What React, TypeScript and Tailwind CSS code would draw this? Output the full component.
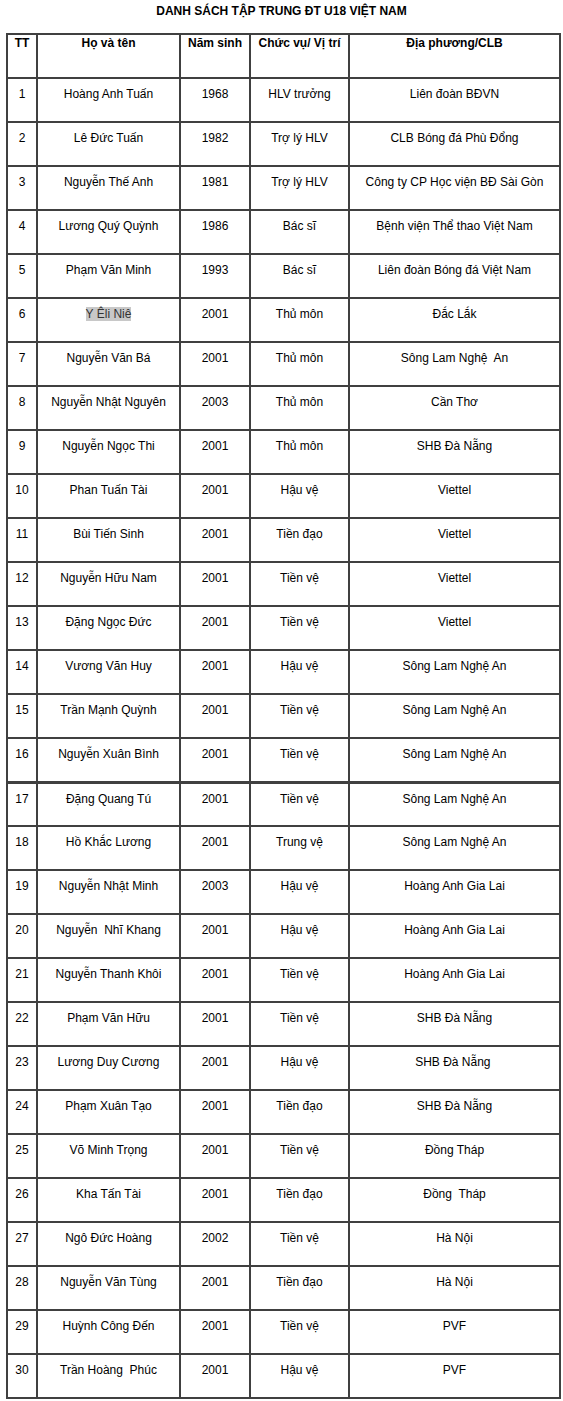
import React from "react";

type Row = [string, string, string, string, string];

const rows: Row[] = [
  ["1", "Hoàng Anh Tuấn", "1968", "HLV trưởng", "Liên đoàn BĐVN"],
  ["2", "Lê Đức Tuấn", "1982", "Trợ lý HLV", "CLB Bóng đá Phù Đổng"],
  ["3", "Nguyễn Thế Anh", "1981", "Trợ lý HLV", "Công ty CP Học viện BĐ Sài Gòn"],
  ["4", "Lương Quý Quỳnh", "1986", "Bác sĩ", "Bệnh viện Thể thao Việt Nam"],
  ["5", "Phạm Văn Minh", "1993", "Bác sĩ", "Liên đoàn Bóng đá Việt Nam"],
  ["6", "Y Êli Niê", "2001", "Thủ môn", "Đắc Lắk"],
  ["7", "Nguyễn Văn Bá", "2001", "Thủ môn", "Sông Lam Nghệ  An"],
  ["8", "Nguyễn Nhật Nguyên", "2003", "Thủ môn", "Cần Thơ"],
  ["9", "Nguyễn Ngọc Thi", "2001", "Thủ môn", "SHB Đà Nẵng"],
  ["10", "Phan Tuấn Tài", "2001", "Hậu vệ", "Viettel"],
  ["11", "Bùi Tiến Sinh", "2001", "Tiền đạo", "Viettel"],
  ["12", "Nguyễn Hữu Nam", "2001", "Tiền vệ", "Viettel"],
  ["13", "Đặng Ngọc Đức", "2001", "Tiền vệ", "Viettel"],
  ["14", "Vương Văn Huy", "2001", "Hậu vệ", "Sông Lam Nghệ An"],
  ["15", "Trần Mạnh Quỳnh", "2001", "Tiền vệ", "Sông Lam Nghệ An"],
  ["16", "Nguyễn Xuân Bình", "2001", "Tiền vệ", "Sông Lam Nghệ An"],
  ["17", "Đặng Quang Tú", "2001", "Tiền vệ", "Sông Lam Nghệ An"],
  ["18", "Hồ Khắc Lương", "2001", "Trung vệ", "Sông Lam Nghệ An"],
  ["19", "Nguyễn Nhật Minh", "2003", "Hậu vệ", "Hoàng Anh Gia Lai"],
  ["20", "Nguyễn  Nhĩ Khang", "2001", "Hậu vệ", "Hoàng Anh Gia Lai"],
  ["21", "Nguyễn Thanh Khôi", "2001", "Tiền vệ", "Hoàng Anh Gia Lai"],
  ["22", "Phạm Văn Hữu", "2001", "Tiền vệ", "SHB Đà Nẵng"],
  ["23", "Lương Duy Cương", "2001", "Hậu vệ", "SHB Đà Nẵng\u00a0"],
  ["24", "Phạm Xuân Tạo", "2001", "Tiền đạo", "SHB Đà Nẵng"],
  ["25", "Võ Minh Trọng", "2001", "Tiền vệ", "Đồng Tháp"],
  ["26", "Kha Tấn Tài", "2001", "Tiền đạo", "Đồng  Tháp"],
  ["27", "Ngô Đức Hoàng", "2002", "Tiền vệ", "Hà Nội"],
  ["28", "Nguyễn Văn Tùng", "2001", "Tiền đạo", "Hà Nội"],
  ["29", "Huỳnh Công Đến", "2001", "Tiền vệ", "PVF"],
  ["30", "Trần Hoàng  Phúc", "2001", "Hậu vệ", "PVF"],
];

const headers = ["TT", "Họ và tên", "Năm sinh", "Chức vụ/ Vị trí", "Địa phương/CLB"];

export default function App() {
  return (
    <div className="w-[563px] bg-white pb-[2px] font-['Liberation_Sans',Arial,sans-serif] text-[12px] text-black">
      <h1 className="h-[33px] pt-[4px] text-center text-[12px] leading-[14px] font-bold">
        DANH SÁCH TẬP TRUNG ĐT U18 VIỆT NAM
      </h1>
      <table className="ml-[6px] w-[553px] table-fixed border-collapse border-2 border-[#404040]">
        <colgroup>
          <col className="w-[30px]" />
          <col className="w-[143px]" />
          <col className="w-[70px]" />
          <col className="w-[99px]" />
          <col className="w-[211px]" />
        </colgroup>
        <thead>
          <tr className="h-[44px]">
            {headers.map((h) => (
              <th
                key={h}
                className="border-2 border-[#404040] px-1 pt-[1px] align-top text-center text-[12px] leading-[14px] font-bold"
              >
                {h}
              </th>
            ))}
          </tr>
        </thead>
        <tbody>
          {rows.map((r) => {
            const sep = r[0] === "16";
            return (
              <tr key={r[0]} className="h-[44px]">
                {r.map((c, i) => (
                  <td
                    key={i}
                    className={
                      sep
                        ? "border-2 border-b-[3px] border-[#404040] px-1 pt-[8px] align-top text-center leading-[14px] whitespace-pre"
                        : "border-2 border-[#404040] px-1 pt-[8px] align-top text-center leading-[14px] whitespace-pre"
                    }
                  >
                    {r[0] === "6" && i === 1 ? (
                      <span className="bg-[#c8c8c8] text-[#333]">{c}</span>
                    ) : (
                      c
                    )}
                  </td>
                ))}
              </tr>
            );
          })}
        </tbody>
      </table>
    </div>
  );
}
